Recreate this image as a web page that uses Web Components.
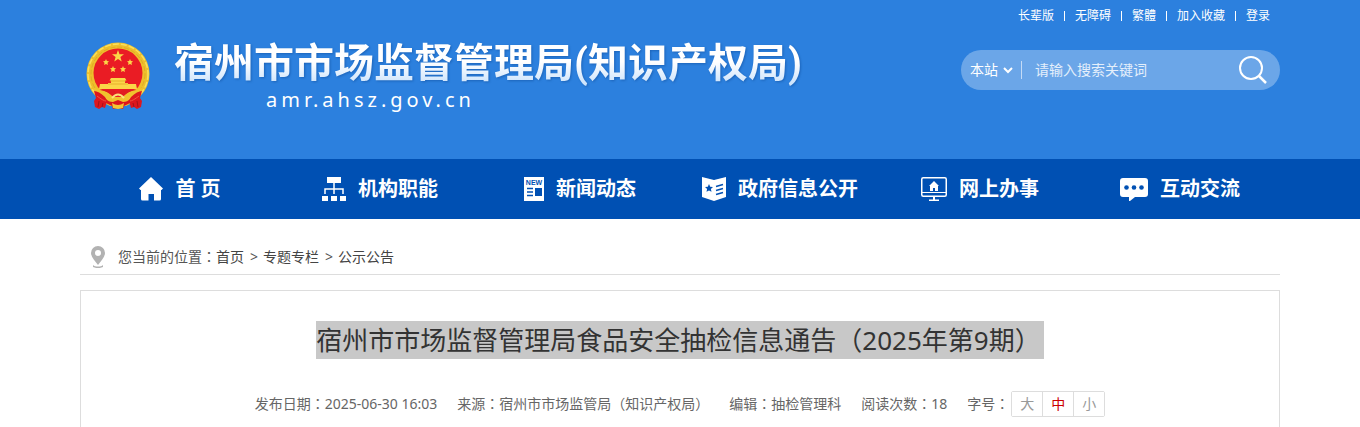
<!DOCTYPE html>
<html lang="zh-CN">
<head>
<meta charset="utf-8">
<meta name="viewport" content="width=device-width, initial-scale=1">
<title>宿州市市场监督管理局食品安全抽检信息通告（2025年第9期）</title>
<style>
    body {
        margin: 0;
        min-height: 100vh;
        display: flex;
        flex-direction: column;
        background: #fff;
        color: #555;
        font: 14px/20px "Noto Sans", "Noto Sans CJK SC", sans-serif;
    }
</style>
</head>
<body>
<site-header>
    <top-links slot="links">
        <a href="#">长辈版</a>
        <a href="#">无障碍</a>
        <a href="#">繁體</a>
        <a href="#">加入收藏</a>
        <a href="#">登录</a>
    </top-links>
    <site-brand domain="amr.ahsz.gov.cn">宿州市市场监督管理局(知识产权局)</site-brand>
    <search-box></search-box>
</site-header>

<main-nav>
    <nav-item icon="home">首 页</nav-item>
    <nav-item icon="org">机构职能</nav-item>
    <nav-item icon="news">新闻动态</nav-item>
    <nav-item icon="book">政府信息公开</nav-item>
    <nav-item icon="screen">网上办事</nav-item>
    <nav-item icon="chat">互动交流</nav-item>
</main-nav>

<bread-crumb>
    <a href="#">首页</a>
    <a href="#">专题专栏</a>
    <a href="#">公示公告</a>
</bread-crumb>

<article-head></article-head>

<script>
class SiteHeader extends HTMLElement {
    constructor() {
        super();
        this.attachShadow({ mode: "open" });
        this.shadowRoot.innerHTML = `
        <style>
        :host {
            display: block;
            background: #2c80de;
            color: #fff;
        }
        header {
            max-width: 1200px;
            margin: 0 auto;
            padding-bottom: 46px;
        }
        .row {
            display: flex;
            justify-content: space-between;
            padding-top: 9px;
        }
        </style>
        <header>
            <slot name="links"></slot>
            <div class="row"><slot></slot></div>
        </header>
        `;
    }
}
customElements.define("site-header", SiteHeader);

class TopLinks extends HTMLElement {
    constructor() {
        super();
        this.attachShadow({ mode: "open" });
        this.shadowRoot.innerHTML = `
        <style>
        :host {
            display: flex;
            justify-content: flex-end;
            align-items: center;
            height: 32px;
            font-size: 12px;
            line-height: 10px;
        }
        ::slotted(a) {
            padding: 0 10px;
            color: #fff;
            text-decoration: none;
        }
        ::slotted(a:not(:last-child)) {
            border-right: 1px solid #fff;
        }
        </style>
        <slot></slot>
        `;
    }
}
customElements.define("top-links", TopLinks);

class SiteBrand extends HTMLElement {
    constructor() {
        super();
        this.attachShadow({ mode: "open" });
        this.shadowRoot.innerHTML = `
        <style>
        :host {
            display: flex;
            gap: 24px;
            padding-left: 6px;
        }
        svg {
            flex: none;
            width: 64px;
            height: 72px;
        }
        h1 {
            margin: 0;
            font-family: Roboto, "Noto Sans CJK SC", sans-serif;
            font-size: 40px;
            line-height: 46px;
            font-weight: 700;
            background: linear-gradient(#fff 45%, #cfe5fc 90%);
            background-clip: text;
            -webkit-background-clip: text;
            -webkit-text-fill-color: transparent;
            filter: drop-shadow(1px 1px 1px rgba(0, 50, 120, .35));
        }
        p {
            margin: 0;
            padding-left: 92px;
            font-size: 20px;
            line-height: 26px;
            letter-spacing: 4px;
        }
        </style>
        <svg viewBox="0 0 64 72" aria-hidden="true">
            <circle cx="32" cy="33" r="31.500" fill="#eebf2b"/>
            <circle cx="32" cy="33" r="30" fill="none" stroke="#fadf5c" stroke-width="1.500" stroke-dasharray="6 2"/>
            <circle cx="32" cy="33" r="27" fill="none" stroke="#dba426" stroke-width=".8" stroke-dasharray="5 2"/>
            <circle cx="32" cy="32" r="24.500" fill="#ea1c24"/>
            <g fill="#fbd648">
                <path d="M32 9l1.500 4.300h4.500l-3.600 2.800 1.300 4.400L32 17.900l-3.700 2.600 1.300-4.400L26 13.300h4.500z"/>
                <path d="M20 18l.9 1.900 2.100.3-1.500 1.500.4 2.200-1.900-1-1.900 1 .4-2.200-1.500-1.500 2.100-.3z"/>
                <path d="M44 18l.9 1.900 2.100.3-1.500 1.500.4 2.200-1.900-1-1.900 1 .4-2.200-1.500-1.500 2.100-.3z"/>
                <path d="M27 25l.9 1.900 2.100.3-1.500 1.500.4 2.200-1.900-1-1.900 1 .4-2.200-1.500-1.500 2.100-.3z"/>
                <path d="M37 25l.9 1.900 2.100.3-1.500 1.500.4 2.200-1.900-1-1.900 1 .4-2.200-1.500-1.500 2.100-.3z"/>
                <path d="M25 37h14l1.500 2.500H39V42h3v1h8l1 5H13l1-5h8v-1h3v-2.500h-1.500z"/>
            </g>
            <path d="M24 40h16M22 43h20" stroke="#dfa222" stroke-width=".7"/>
            <path d="M8 47c8 1 15 4 19 9h10c4-5 11-8 19-9l-4 12-12 6H24l-12-6z" fill="#f0c22e"/>
            <path d="M14 49h13l5 3 5-3h13c-6 1-10 3-13 6l-5-2-5 2c-3-3-7-5-13-6z" fill="#e11b22"/>
            <path d="M26 57q6-7 12 0" fill="none" stroke="#fbe27a" stroke-width="2"/>
            <path d="M8 50c3 0 7 2 11 6l2 4-2 7-3-1-3 2-4-2-1-6 2-3z" fill="#dd171e"/>
            <path d="M56 50c-3 0-7 2-11 6l-2 4 2 7 3-1 3 2 4-2 1-6-2-3z" fill="#dd171e"/>
            <path d="M19 57c3 3 5 4 8 4l5-2 5 2c3 0 5-1 8-4l1 4-8 4-1 3-5-1-5 1-1-3-8-4z" fill="#dd171e"/>
            <path d="M26 62q6 4 12 0l-1 5-5 1-5-1z" fill="#f3c735"/>
            <path d="M11 55c4 3 7 5 9 5M53 55c-4 3-7 5-9 5" fill="none" stroke="#f5503f"/>
            <path d="M13 60l-1 6M17 62l-1 4M51 60l1 6M47 62l1 4" stroke="#a51218"/>
        </svg>
        <div>
            <h1><slot></slot></h1>
            <p></p>
        </div>
        `;
    }
    connectedCallback() {
        this.shadowRoot.querySelector("p").textContent = this.getAttribute("domain");
    }
}
customElements.define("site-brand", SiteBrand);

class SearchBox extends HTMLElement {
    constructor() {
        super();
        this.attachShadow({ mode: "open" });
        this.shadowRoot.innerHTML = `
        <style>
        :host {
            display: block;
            margin-top: 9px;
        }
        form {
            display: flex;
            align-items: center;
            box-sizing: border-box;
            width: 319px;
            height: 40px;
            padding: 0 12px 0 9px;
            border-radius: 20px;
            background: rgba(255, 255, 255, .3);
        }
        select, input, button {
            margin: 0;
            padding: 0;
            border: 0;
            background: none;
            color: #fff;
            font: inherit;
        }
        .scope {
            display: grid;
            align-items: center;
            width: 43px;
        }
        .scope > * {
            grid-area: 1 / 1;
        }
        select {
            appearance: none;
            width: 100%;
        }
        option {
            color: #333;
        }
        .scope svg {
            justify-self: end;
            pointer-events: none;
        }
        input {
            flex: 1;
            min-width: 0;
            margin-left: 8px;
            padding-left: 13px;
            border-left: 1px solid rgba(255, 255, 255, .6);
            line-height: 18px;
            height: 18px;
            outline: none;
        }
        input::placeholder {
            color: #e4effb;
            opacity: 1;
        }
        button {
            display: flex;
            cursor: pointer;
        }
        </style>
        <form role="search">
            <div class="scope">
                <select aria-label="搜索范围"><option>本站</option></select>
                <svg width="10" height="8" viewBox="0 0 10 8" fill="none" stroke="#fff" stroke-width="2"><path d="M1 2l4 4 4-4"/></svg>
            </div>
            <input type="text" aria-label="搜索关键词" placeholder="请输入搜索关键词">
            <button type="button" aria-label="搜索">
                <svg width="30" height="28" viewBox="0 0 30 28" fill="none" stroke="#fff" stroke-width="2"><circle cx="13" cy="12" r="11"/><path d="M20.500 19.500l7.500 7.500" stroke-width="2.500"/></svg>
            </button>
        </form>
        `;
    }
}
customElements.define("search-box", SearchBox);

class MainNav extends HTMLElement {
    constructor() {
        super();
        this.attachShadow({ mode: "open" });
        this.shadowRoot.innerHTML = `
        <style>
        :host {
            display: block;
            background: #0050b3;
        }
        nav {
            display: grid;
            grid-template-columns: repeat(6, 1fr);
            max-width: 1200px;
            margin: 0 auto;
        }
        </style>
        <nav><slot></slot></nav>
        `;
    }
}
customElements.define("main-nav", MainNav);

const navIcons = {
    home: `<svg width="24" height="24" viewBox="0 0 24 24"><path d="M12 0L24 11.500 22.500 13H22v9q0 1.500-1.500 1.500H15V17H9.500v6.500h-6Q2 23.500 2 22v-9h-.5L0 11.500z"/></svg>`,
    org: `<svg width="24" height="24" viewBox="0 0 24 24"><path d="M5 0h14v6H5zM0 19h6v5H0zM9 19h6v5H9zM18 19h6v5h-6z"/><path d="M12 6v11M3 17v-5h18v5" fill="none" stroke="#fff" stroke-width="1.500"/></svg>`,
    news: `<svg width="20" height="24" viewBox="0 0 20 24"><path d="M0 0h20v24H0z"/><text x="10" y="8" text-anchor="middle" font-size="7" font-weight="700" font-family="Liberation Sans, sans-serif" fill="#0050b3">NEW</text><path d="M3 11.500h6M3 15h6M3 18.500h6" stroke="#0050b3" stroke-width="1.500"/><path d="M11 11h7v8h-7z" fill="#0050b3"/></svg>`,
    book: `<svg width="24" height="24" viewBox="0 0 24 24"><path d="M0 0l12 3 12-3v20l-12 4-12-4z"/><path d="M7 7l1.200 2.700 2.800.3-2.100 1.900.6 2.900L7 13.400l-2.500 1.400.6-2.900L3 10l2.800-.3z" fill="#0050b3"/><path d="M14 9.500l7-2M14 13.500l7-2M14 17.500l7-2" stroke="#0050b3" stroke-width="1.500"/></svg>`,
    screen: `<svg width="26" height="24" viewBox="0 0 26 24"><rect x=".75" y=".75" width="24.500" height="18.500" rx="1.500" fill="none" stroke="#fff" stroke-width="1.500"/><path d="M1 15.500h24" stroke="#fff"/><path d="M13 4l5 5h-1v5h-3v-3h-2v3H9V9H8zM12 19h2v3.500h4V24H8v-1.500h4z"/></svg>`,
    chat: `<svg width="28" height="24" viewBox="0 0 28 24"><path d="M3 1h22q3 0 3 3v13q0 3-3 3H15l-5 4H9v-4H3q-3 0-3-3V4q0-3 3-3z"/><g fill="#0050b3"><circle cx="6.500" cy="10.500" r="2.300"/><circle cx="14" cy="10.500" r="2.300"/><circle cx="21.500" cy="10.500" r="2.300"/></g></svg>`
};

class NavItem extends HTMLElement {
    constructor() {
        super();
        this.attachShadow({ mode: "open" });
        this.shadowRoot.innerHTML = `
        <style>
        :host {
            display: block;
        }
        a {
            display: flex;
            justify-content: center;
            align-items: center;
            gap: 12px;
            height: 60px;
            color: #fff;
            font-size: 20px;
            font-weight: 700;
            text-decoration: none;
            white-space: nowrap;
        }
        svg {
            flex: none;
            fill: #fff;
        }
        #icon {
            display: contents;
        }
        </style>
        <a href="#"><span id="icon"></span><slot></slot></a>
        `;
    }
    connectedCallback() {
        this.shadowRoot.querySelector("#icon").innerHTML = navIcons[this.getAttribute("icon")];
    }
}
customElements.define("nav-item", NavItem);

class BreadCrumb extends HTMLElement {
    constructor() {
        super();
        this.attachShadow({ mode: "open" });
        this.shadowRoot.innerHTML = `
        <style>
        :host {
            display: block;
            width: 100%;
            max-width: 1200px;
            margin: 0 auto;
        }
        nav {
            display: flex;
            align-items: center;
            margin-top: 20px;
            padding-left: 11px;
            height: 35px;
            border-bottom: 1px solid #ddd;
        }
        svg {
            margin-right: 13px;
        }
        .mid {
            font-family: "Noto Sans CJK TC", sans-serif;
            line-height: 1;
        }
        ::slotted(a) {
            color: #444;
            text-decoration: none;
        }
        i {
            font-style: normal;
            padding: 0 5px 0 6px;
        }
        </style>
        <nav aria-label="当前位置">
            <svg width="14" height="22" viewBox="0 0 14 22" fill="#b2b2b2"><path fill-rule="evenodd" d="M7 0a7 7 0 0 1 7 7c0 4-4 8-7 12C4 15 0 11 0 7a7 7 0 0 1 7-7zm0 4a3 3 0 1 0 0 6 3 3 0 0 0 0-6z"/><path d="M2 19c2 2 8 2 10 0v2c-3 1.500-7 1.500-10 0z"/></svg>
            <span>您当前的位置<span class="mid" lang="zh-TW">：</span></span>
            <slot name="s0"></slot><i>&gt;</i><slot name="s1"></slot><i>&gt;</i><slot name="s2"></slot>
        </nav>
        `;
    }
    connectedCallback() {
        // one named slot for each step, so the separators can sit between them
        this.querySelectorAll("a").forEach((link, i) => {
            link.slot = "s" + i;
        });
    }
}
customElements.define("bread-crumb", BreadCrumb);

class SizePicker extends HTMLElement {
    constructor() {
        super();
        this.attachShadow({ mode: "open" });
        this.shadowRoot.innerHTML = `
        <style>
        :host {
            display: inline-flex;
            border: 1px solid #ddd;
            border-radius: 2px;
        }
        button {
            width: 31px;
            height: 24px;
            padding: 0;
            border: 0;
            border-left: 1px solid #ddd;
            background: #fff;
            color: #999;
            font: inherit;
            cursor: pointer;
        }
        button:first-of-type {
            width: 30px;
            border-left: 0;
        }
        button[aria-pressed="true"] {
            color: #c00;
        }
        </style>
        <button aria-pressed="false">大</button><button aria-pressed="true">中</button><button aria-pressed="false">小</button>
        `;
        this.buttons = this.shadowRoot.querySelectorAll("button");
        this.buttons.forEach((button) => {
            button.addEventListener("click", () => this._select(button));
        });
    }
    _select(picked) {
        this.buttons.forEach((button) => {
            button.setAttribute("aria-pressed", button === picked);
        });
    }
}
customElements.define("size-picker", SizePicker);

class ArticleHead extends HTMLElement {
    constructor() {
        super();
        this.attachShadow({ mode: "open" });
        this.shadowRoot.innerHTML = `
        <style>
        :host {
            flex: 1;
            box-sizing: border-box;
            width: 100%;
            max-width: 1200px;
            margin: 15px auto 0;
            padding-top: 30px;
            border: 1px solid #ddd;
            border-bottom: 0;
            text-align: center;
        }
        h2 {
            display: flex;
            justify-content: center;
            margin: 0;
            font-size: 26px;
            line-height: 38px;
            font-weight: 400;
            color: #333;
        }
        mark {
            padding-right: 3px;
            background: #c8c8c8;
            color: inherit;
        }
        .mid {
            font-family: "Noto Sans CJK TC", sans-serif;
            line-height: 1;
        }
        .meta {
            display: flex;
            flex-wrap: wrap;
            justify-content: center;
            align-items: center;
            gap: 0 20px;
            margin-top: 32px;
            color: #666;
        }
        .size {
            display: flex;
            align-items: center;
            gap: 2px;
        }
        </style>
        <h2><mark>宿州市市场监督管理局食品安全抽检信息通告<span class="mid" lang="zh-TW">（</span>2025年第9期<span class="mid" lang="zh-TW">）</span></mark></h2>
        <div class="meta">
            <span>发布日期<span class="mid" lang="zh-TW">：</span>2025-06-30 16:03</span>
            <span>来源<span class="mid" lang="zh-TW">：</span>宿州市市场监管局<span class="mid" lang="zh-TW">（</span>知识产权局<span class="mid" lang="zh-TW">）</span></span>
            <span>编辑<span class="mid" lang="zh-TW">：</span>抽检管理科</span>
            <span>阅读次数<span class="mid" lang="zh-TW">：</span>18</span>
            <span class="size"><span>字号<span class="mid" lang="zh-TW">：</span></span><size-picker></size-picker></span>
        </div>
        `;
    }
}
customElements.define("article-head", ArticleHead);
</script>
</body>
</html>
